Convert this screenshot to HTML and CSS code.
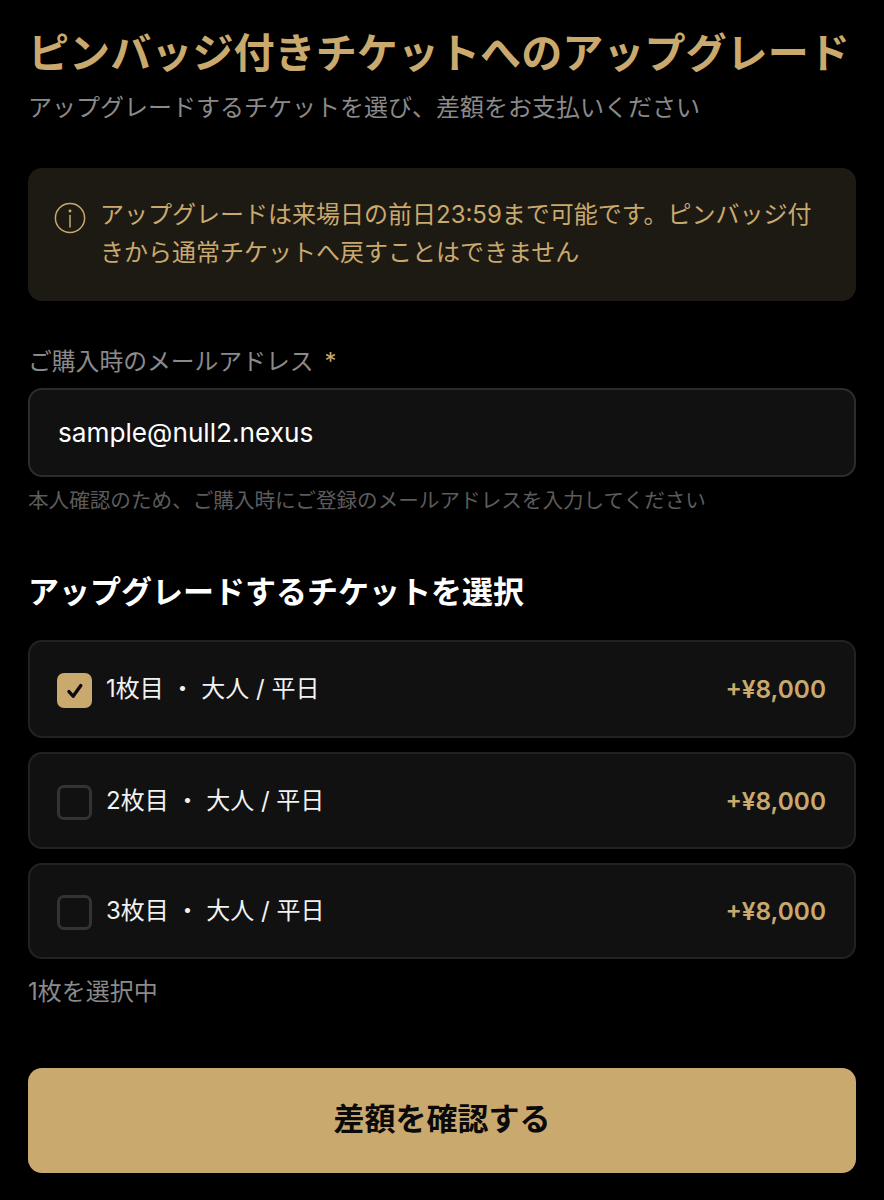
FILE: index.html
```html
<!DOCTYPE html>
<html lang="ja">
<head>
<meta charset="utf-8">
<title>ピンバッジ付きチケットへのアップグレード</title>
<link rel="stylesheet" href="styles.css">
</head>
<body>
<main class="page">
  <h1 class="title">ピンバッジ付きチケットへのアップグレード</h1>
  <p class="subtitle">アップグレードするチケットを選び、差額をお支払いください</p>

  <div class="notice">
    <svg class="notice-icon" viewBox="0 0 32 32" fill="none" stroke="currentColor" stroke-width="1.5" stroke-linecap="round">
      <circle cx="16" cy="16" r="14.6"/>
      <path d="M16 13.5V25"/>
      <circle cx="16" cy="9" r="0.7" fill="currentColor"/>
    </svg>
    <p class="notice-text">アップグレードは来場日の前日23:59まで可能です。ピンバッジ付きから通常チケットへ戻すことはできません</p>
  </div>

  <label class="field-label">ご購入時のメールアドレス<span class="req">*</span></label>
  <div class="input">sample@null2.nexus</div>
  <p class="hint">本人確認のため、ご購入時にご登録のメールアドレスを入力してください</p>

  <h2 class="section">アップグレードするチケットを選択</h2>

  <ul class="tickets">
    <li class="ticket ticket-first">
      <span class="check check-on">
        <svg viewBox="0 0 20 20" fill="none" stroke="#0a0a0a" stroke-width="3" stroke-linecap="round" stroke-linejoin="round"><path d="M4.5 10.5 8.3 14.8 15.3 5"/></svg>
      </span>
      <span class="ticket-name">1枚目 ・ 大人 / 平日</span>
      <span class="price">+¥8,000</span>
    </li>
    <li class="ticket">
      <span class="check"></span>
      <span class="ticket-name">2枚目 ・ 大人 / 平日</span>
      <span class="price">+¥8,000</span>
    </li>
    <li class="ticket ticket-last">
      <span class="check"></span>
      <span class="ticket-name">3枚目 ・ 大人 / 平日</span>
      <span class="price">+¥8,000</span>
    </li>
  </ul>

  <p class="count">1枚を選択中</p>

  <button class="submit" type="button"><span class="submit-label">差額を確認する</span></button>
</main>
</body>
</html>
```
FILE: styles.css
```css
* { box-sizing: border-box; }
html, body { margin: 0; padding: 0; background: #000; }
body {
  font-family: Inter, "Noto Sans CJK JP", sans-serif;
  color: #fff;
}
.page {
  width: 884px;
  height: 1200px;
  overflow: hidden;
  padding: 25px 28px 0;
}
.title {
  margin: 0;
  font-size: 41.1px;
  line-height: 56px;
  font-weight: 700;
  color: #c9a96e;
  white-space: nowrap;
}
.subtitle {
  margin: 10px 0 0;
  font-size: 24px;
  line-height: 34px;
  color: #8a8a8a;
  white-space: nowrap;
}
.notice {
  margin-top: 43px;
  height: 133px;
  padding: 28px 28px 0 26px;
  display: flex;
  align-items: flex-start;
  gap: 14px;
  background: #1d1a14;
  border-radius: 14px;
  color: #c9a96e;
}
.notice-icon {
  flex: none;
  width: 32px;
  height: 32px;
  margin-top: 6px;
}
.notice-text {
  margin: 0;
  font-size: 24px;
  line-height: 38px;
}
.field-label {
  display: block;
  margin-top: 44px;
  font-size: 23.8px;
  line-height: 34px;
  color: #8a8a8a;
}
.req { margin-left: 11px; color: #c9a96e; }
.input {
  margin-top: 9px;
  height: 89px;
  padding-left: 28px;
  display: flex;
  align-items: center;
  font-size: 26.2px;
  color: #fff;
  background: #111;
  border: 2px solid #2c2c2c;
  border-radius: 14px;
}
.hint {
  margin: 9px 0 0;
  font-size: 20.6px;
  line-height: 30px;
  color: #5c5c5c;
  white-space: nowrap;
}
.section {
  margin: 55px 0 0;
  font-size: 31px;
  line-height: 42px;
  font-weight: 700;
  color: #fff;
}
.tickets {
  list-style: none;
  margin: 27px 0 0;
  padding: 0;
  display: flex;
  flex-direction: column;
  gap: 14px;
}
.ticket {
  height: 97px;
  padding: 0 28px 0 27px;
  display: flex;
  align-items: center;
  background: #111;
  border: 2px solid #222;
  border-radius: 14px;
}
.ticket-first { height: 98px; }
.ticket-last { height: 96px; }
.check {
  flex: none;
  width: 35px;
  height: 35px;
  margin-top: 3px;
  border: 3px solid #333;
  border-radius: 7px;
  display: flex;
  align-items: center;
  justify-content: center;
}
.check-on {
  background: #c9a96e;
  border-color: #c9a96e;
}
.check-on svg { width: 22px; height: 22px; }
.ticket-name {
  margin-left: 14px;
  padding-bottom: 5px;
  font-size: 24px;
  color: #f2f2f2;
  white-space: pre;
}
.price {
  margin-left: auto;
  font-size: 24.4px;
  font-weight: 600;
  color: #c9a96e;
}
.count {
  margin: 16px 0 0;
  font-size: 24px;
  line-height: 34px;
  color: #8a8a8a;
}
.submit {
  display: block;
  width: 100%;
  height: 105px;
  margin-top: 59px;
  padding: 0 0 8px;
  border: 0;
  border-radius: 14px;
  background: #c9a96e;
  color: #0a0a0a;
  font-family: inherit;
  font-size: 31px;
  font-weight: 700;
}
```
